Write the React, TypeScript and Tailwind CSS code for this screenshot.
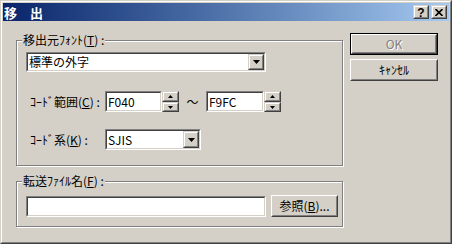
import React from "react";

const sunkenOuter =
  "border border-t-[#808080] border-l-[#808080] border-b-white border-r-white";
const sunkenInner =
  "border border-t-[#404040] border-l-[#404040] border-b-[#d4d0c8] border-r-[#d4d0c8]";
const smallRaisedOuter =
  "border border-t-[#d4d0c8] border-l-[#d4d0c8] border-b-[#404040] border-r-[#404040]";
const smallRaisedInner =
  "border border-t-white border-l-white border-b-[#808080] border-r-[#808080]";
const btnOuter =
  "border border-t-white border-l-white border-b-[#404040] border-r-[#404040]";
const btnInner =
  "border border-t-[#d4d0c8] border-l-[#d4d0c8] border-b-[#808080] border-r-[#808080]";

function Sunken({ className, children }: { className: string; children?: React.ReactNode }) {
  return (
    <div className={`${sunkenOuter} ${className}`}>
      <div className={`${sunkenInner} h-full w-full bg-white flex`}>{children}</div>
    </div>
  );
}

function SmallButton({ className, children }: { className: string; children?: React.ReactNode }) {
  return (
    <div className={`${smallRaisedOuter} ${className} bg-[#d4d0c8]`}>
      <div className={`${smallRaisedInner} h-full w-full flex items-center justify-center`}>{children}</div>
    </div>
  );
}

function DownArrow() {
  return (
    <svg width="7" height="4" viewBox="0 0 7 4">
      <path d="M0 0h7L3.5 4z" fill="#000" />
    </svg>
  );
}

function TinyArrow({ up }: { up?: boolean }) {
  return (
    <svg width="5" height="3" viewBox="0 0 5 3">
      {up ? <path d="M2.5 0L5 3H0z" fill="#000" /> : <path d="M0 0h5L2.5 3z" fill="#000" />}
    </svg>
  );
}

function Combo({ className, text }: { className: string; text: string }) {
  return (
    <Sunken className={className}>
      <div className="flex-1 flex items-center pl-[1px] text-black leading-none">{text}</div>
      <SmallButton className="w-[16px] h-full">
        <DownArrow />
      </SmallButton>
    </Sunken>
  );
}

function Spinner() {
  return (
    <div className="flex flex-col w-[17px] h-[21px]">
      <SmallButton className="w-full h-[11px]">
        <TinyArrow up />
      </SmallButton>
      <SmallButton className="w-full h-[10px]">
        <TinyArrow />
      </SmallButton>
    </div>
  );
}

function Group({ label, className, children }: { label: React.ReactNode; className: string; children?: React.ReactNode }) {
  return (
    <div
      className={`relative border border-[#808080] shadow-[inset_1px_1px_0_#fff,1px_1px_0_#fff] ${className}`}
    >
      <div className="absolute left-[5px] top-[-8px] bg-[#d4d0c8] px-[1px] leading-[14px] h-[14px] whitespace-nowrap">{label}</div>
      {children}
    </div>
  );
}

export default function App() {
  return (
    <div className="w-[452px] h-[244px] bg-[#d4d0c8] border border-t-[#d4d0c8] border-l-[#d4d0c8] border-b-[#404040] border-r-[#404040] font-['Noto_Sans_CJK_JP',sans-serif] text-[12px] text-black">
      <div className="h-full border border-t-white border-l-white border-b-[#808080] border-r-[#808080] p-px flex flex-col">
        {/* title bar */}
        <div className="h-[18px] flex items-center bg-linear-to-r from-[#0a246a] to-[#a6caf0] shrink-0">
          <div className="pl-px flex-1 text-white font-bold text-[13px] leading-none">移　出</div>
          <div className="flex gap-[2px] pr-[2px]">
            <SmallButton className="w-[16px] h-[14px]">
              <span className="font-['Liberation_Sans',sans-serif] font-bold text-[12px] leading-none mt-[1px]">?</span>
            </SmallButton>
            <SmallButton className="w-[16px] h-[14px]">
              <svg width="8" height="7" viewBox="0 0 8 7">
                <path d="M0.5 0L7.5 7M7.5 0L0.5 7" stroke="#000" strokeWidth="1.6" />
              </svg>
            </SmallButton>
          </div>
        </div>

        {/* content */}
        <div className="flex items-start pl-[13px]">
          <div className="flex flex-col pt-[19px] w-[328px]">
            <Group
              className="w-[327px] h-[126px]"
              label={
                <span>
                  移出元ﾌｫﾝﾄ(<u>T</u>) :
                </span>
              }
            >
              <div className="flex flex-col pl-[9px] pt-[11px]">
                <Combo className="w-[240px] h-[20px]" text="標準の外字" />
                <div className="flex items-center mt-[19px]">
                  <div className="w-[79px] pl-[4px] leading-none whitespace-nowrap">
                    ｺｰﾄﾞ範囲(<u>C</u>) :
                  </div>
                  <Sunken className="w-[57px] h-[21px]">
                    <div className="flex items-center pl-[1px] leading-none">F040</div>
                  </Sunken>
                  <Spinner />
                  <div className="w-[27px] flex justify-center leading-none">～</div>
                  <Sunken className="w-[58px] h-[21px]">
                    <div className="flex items-center pl-[1px] leading-none">F9FC</div>
                  </Sunken>
                  <Spinner />
                </div>
                <div className="flex items-center mt-[17px]">
                  <div className="w-[79px] pl-[4px] leading-none whitespace-nowrap">
                    ｺｰﾄﾞ系(<u>K</u>) :
                  </div>
                  <Combo className="w-[96px] h-[21px]" text="SJIS" />
                </div>
              </div>
            </Group>
            <Group
              className="w-[327px] h-[46px] mt-[15px]"
              label={
                <span>
                  転送ﾌｧｲﾙ名(<u>F</u>) :
                </span>
              }
            >
              <div className="flex items-center pl-[9px] pt-[13px]">
                <Sunken className="w-[240px] h-[21px]" />
                <div className={`${btnOuter} ml-[5px] w-[67px] h-[22px]`}>
                  <div className={`${btnInner} h-full w-full flex items-center justify-center leading-none whitespace-nowrap`}>
                    参照(<u>B</u>)...
                  </div>
                </div>
              </div>
            </Group>
          </div>

          <div className="flex flex-col pt-[12px] ml-[6px] w-[88px]">
            <div className="border border-black h-[22px]">
              <div className={`${btnOuter} h-full`}>
                <div className={`${btnInner} h-full flex items-center justify-center leading-none text-[#808080] [text-shadow:1px_1px_0_#fff]`}>
                  OK
                </div>
              </div>
            </div>
            <div className={`${btnOuter} h-[22px] mt-[4px]`}>
              <div className={`${btnInner} h-full flex items-center justify-center leading-none`}>ｷｬﾝｾﾙ</div>
            </div>
          </div>
        </div>
      </div>
    </div>
  );
}
